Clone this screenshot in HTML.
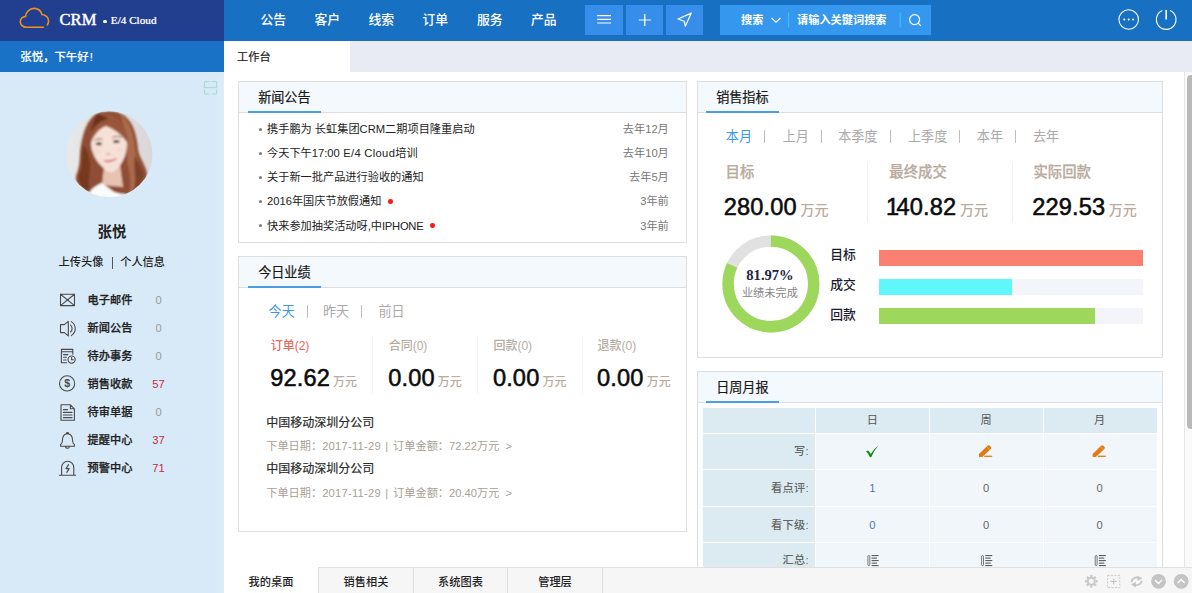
<!DOCTYPE html>
<html lang="zh-CN">
<head>
<meta charset="utf-8">
<title>CRM E/4 Cloud</title>
<style>
*{box-sizing:border-box;margin:0;padding:0}
html,body{width:1192px;height:593px;overflow:hidden;background:#fff}
body{position:relative;font-family:"Liberation Sans","Noto Sans CJK SC",sans-serif;font-size:11.2px;color:#222;-webkit-font-smoothing:antialiased}
.abs{position:absolute}
.t{position:absolute;white-space:nowrap;line-height:20px;height:20px}
/* header */
#logo{position:absolute;left:0;top:0;width:224px;height:41px;background:#223f8f}
#hdr{position:absolute;left:224px;top:0;width:968px;height:41px;background:#1870c3}
#greet{position:absolute;left:0;top:41px;width:224px;height:31px;background:#1a72c6}
#side{position:absolute;left:0;top:72px;width:224px;height:521px;background:#d8eaf8}
#tabbar{position:absolute;left:224px;top:41px;width:968px;height:31px;background:#e8ebf4}
#tab1{position:absolute;left:224px;top:41px;width:126px;height:31px;background:#fff}
.nav{position:absolute;top:9.8px;height:20px;line-height:20px;color:#fff;font-size:12.8px;font-weight:500;white-space:nowrap}
.hb{position:absolute;top:5px;height:30px;background:#378eea}
/* panels */
.panel{position:absolute;border:1px solid #dedede;background:#fff}
.ph{position:absolute;left:0;top:0;right:0;height:31px;background:#f4f9fd;border-bottom:1px solid #dedede}
.ph .ul{position:absolute;left:9px;bottom:-1px;width:73px;height:2px;background:#4a9de3}
.ph .tt{position:absolute;left:19.2px;top:5.6px;line-height:20px;font-size:13.1px;color:#1a1a1a;font-weight:400;-webkit-text-stroke:0.22px #1a1a1a;white-space:nowrap}

.tab{position:absolute;white-space:nowrap;line-height:20px;height:20px;font-size:13.1px;margin-top:0.4px;color:#a9a9a9}
.tab.on{color:#3a98f0}
.sep{position:absolute;width:1px;height:13px;background:#bdbdbd}
.lbl{position:absolute;white-space:nowrap;line-height:20px;height:20px}
.num{position:absolute;white-space:nowrap;line-height:30px;height:30px;font-size:23.6px;font-weight:normal;color:#0c0c0c;letter-spacing:0.15px;-webkit-text-stroke:0.55px #0c0c0c;margin-top:1px}
.num span{-webkit-text-stroke:0}
.wy{position:absolute;white-space:nowrap;line-height:20px;height:20px;color:#b9ab9e;font-weight:500}
.vd{position:absolute;width:1px;background:#f3f3f3}
.nw{position:absolute;left:28px;white-space:nowrap;line-height:20px;height:20px;font-size:11.2px;color:#222}
.nd{position:absolute;right:17.2px;white-space:nowrap;line-height:20px;height:20px;font-size:11.2px;color:#777;text-align:right}
.bu{position:absolute;left:20px;width:3px;height:3px;border-radius:50%;background:#7a7a7a}
.rd{display:inline-block;width:4.6px;height:4.6px;border-radius:50%;background:#f21d1d;margin-left:7px;vertical-align:1.6px}
</style>
</head>
<body>

<div id="logo">
<svg class="abs" style="left:0;top:0" width="224" height="41" viewBox="0 0 224 41"><path d="M43.5 27.3 H26.5 C22.8 27.3 20.3 24.8 20.3 21.8 C20.3 19 22.5 16.7 25.6 16.4 C26 11.9 29.6 8.4 34 8.4 C37.8 8.4 41 10.9 42 14.5 C45.7 14.7 48.6 17.4 48.6 20.9 C48.6 22.4 48.2 23.7 47.4 24.8" fill="none" stroke="#f0931d" stroke-width="1.6" stroke-linecap="round"/></svg>
<div class="t" style="left:59.5px;top:9.5px;font-family:'Liberation Serif',serif;font-size:16.6px;color:#fff;letter-spacing:0;-webkit-text-stroke:0.3px #fff;text-shadow:0 0 1px rgba(255,255,255,.5)">CRM</div>
<div class="abs" style="left:102.8px;top:19.7px;width:3.8px;height:3.8px;border-radius:50%;background:#fff"></div>
<div class="t" style="left:110.8px;top:10.3px;font-family:'Liberation Serif',serif;font-weight:normal;font-size:11.2px;color:#fff;-webkit-text-stroke:0.2px #fff;text-shadow:0 0 1px rgba(255,255,255,.35)">E/4 Cloud</div>
</div>
<div id="hdr">
<div class="nav" style="left:36.5px">公告</div>
<div class="nav" style="left:90.5px">客户</div>
<div class="nav" style="left:144.5px">线索</div>
<div class="nav" style="left:198.5px">订单</div>
<div class="nav" style="left:253px">服务</div>
<div class="nav" style="left:307px">产品</div>
<div class="hb" style="left:361px;width:38px"></div>
<div class="hb" style="left:402px;width:37px"></div>
<div class="hb" style="left:442px;width:37px"></div>
<div class="hb" style="left:496px;width:211px;background:#3597ed"></div>
<svg class="abs" style="left:0;top:0" width="968" height="41" viewBox="224 0 968 41" fill="none" stroke="#fff" stroke-width="1.2">
<path d="M597.2 15.6H611M597.2 19.3H611M597.2 23H611"/>
<path d="M638.8 20H650.8M644.8 14V26"/>
<path d="M691.3 13.1L678 19L684.2 21.3L685.3 26.2Z" stroke-linejoin="round"/>
<path d="M771.6 18L776 22.3L780.4 18" stroke-width="1.15"/>
<path d="M788.7 12.5V27.5M900.2 12.5V27.5" stroke="#48c3f3" stroke-width="1"/>
<circle cx="914.6" cy="19.6" r="5" stroke-width="1.2"/><path d="M918.2 23.2L920.8 25.8" stroke-width="1.2"/>
<circle cx="1128.7" cy="19.5" r="9.8" stroke-width="1.1"/>
<circle cx="1124.3" cy="19.6" r="1" fill="#fff" stroke="none"/><circle cx="1128.7" cy="19.6" r="1" fill="#fff" stroke="none"/><circle cx="1133.1" cy="19.6" r="1" fill="#fff" stroke="none"/>
<path d="M1162.3 10.6A9.8 9.8 0 1 0 1170.1 10.6" stroke-width="1.1"/><path d="M1166.2 10V19.5" stroke-width="1.6"/>
</svg>
<div class="t" style="left:517px;top:9.5px;color:#fff;font-weight:bold;font-size:11.2px">搜索</div>
<div class="t" style="left:573px;top:9.5px;color:#fff;font-weight:bold;font-size:11.2px">请输入关键词搜索</div>
</div>
<div id="greet"><div class="t" style="left:20.3px;top:5.5px;color:#fff;font-weight:500;-webkit-text-stroke:0.15px #fff;font-size:11.4px">张悦，下午好<span style="margin-left:1.2px">!</span></div></div>
<div id="side"><div class="abs" style="right:0;top:0;width:6px;height:521px;background:#dbecf9"></div>
<svg class="abs" style="left:0;top:0" width="224" height="521" viewBox="0 72 224 521" fill="none">
<defs><clipPath id="avc"><circle cx="109.4" cy="154.2" r="43"/></clipPath><filter id="bl" x="-10%" y="-10%" width="120%" height="120%"><feGaussianBlur stdDeviation="0.9"/></filter>
<linearGradient id="avbg" x1="0" x2="1"><stop offset="0" stop-color="#e9e9ea"/><stop offset="1" stop-color="#d9d7d8"/></linearGradient></defs>
<!-- scan icon -->
<path d="M204.4 87V81.6H209.6M211.4 81.6H216.6V87M203.8 87.7H217.2M204.4 89.6V93.9H209.6M211.4 93.9H216.6V89.6" stroke="#a3dccd" stroke-width="1"/>
<!-- avatar -->
<g clip-path="url(#avc)"><rect x="66" y="111" width="87" height="87" fill="url(#avbg)"/>
<g filter="url(#bl)" transform="translate(60 105)">
<path d="M36 9C44 5 58 5 66 12C74 19 77 32 78 44C79 54 88 62 87 72C86 80 78 86 68 89L30 88C20 84 13 78 17 68C21 58 19 50 21 40C23 28 27 15 36 9Z" fill="#8f4e34"/>
<path d="M60 9C70 15 74 30 75 44C76 56 85 64 83 73C81 80 75 84 69 87C73 75 67 63 67 51C67 36 65 22 60 9Z" fill="#ab6a4c"/>
<path d="M75 50C78 58 84 64 83 72C82 78 78 82 74 84C77 74 73 62 75 50Z" fill="#7d412b"/>
<path d="M23 40C21 52 23 60 19 70C17 78 23 84 30 87C27 77 31 67 30 57C29 49 27 44 23 40Z" fill="#77391f"/>
<path d="M44 62L60 60L63 82L42 80Z" fill="#e9c3b1"/>
<path d="M27 92C30 84 37 80 42 78L54 87L68 91L60 100L30 100Z" fill="#fbfbfb"/>
<path d="M31 38C31 26 38 18 48 18C60 18 67 26 67 38C67 50 62 59 56 65C53 68 50 68 47 66C39 60 31 50 31 38Z" fill="#f6e1d7"/>
<path d="M37 10C33 18 30 28 30 41C33 31 38 24 46 21C54 24 62 29 68 39C68 26 62 14 52 10C46 8 41 8 37 10Z" fill="#99563a"/>
<path d="M37 9C34 14 32 20 31 28C35 20 41 15 49 14C44 11 40 9 37 9Z" fill="#6b311c"/>
<path d="M34.5 35.2C37 33.6 40 33.4 42.5 34.4M52.5 32.6C55.5 31 59 31 61.5 32.6" stroke="#7a4a38" stroke-width="1" fill="none"/>
<ellipse cx="38.8" cy="38.8" rx="3" ry="1.5" fill="#4e322c"/><ellipse cx="56.3" cy="36.6" rx="3.2" ry="1.5" fill="#4e322c"/>
<path d="M43.8 55.2C47 57.4 52 57 56.6 53.4C52 55.6 47 56.2 43.8 55.2Z" fill="#dc6f78" stroke="#dc6f78" stroke-width="1.1"/>
<ellipse cx="48.2" cy="49" rx="2.4" ry="1" fill="#dba695"/>
<ellipse cx="37" cy="47" rx="4" ry="3" fill="#f3cfc4" opacity=".35"/><ellipse cx="60" cy="45" rx="4" ry="3" fill="#f3cfc4" opacity=".35"/>
</g></g>
<!-- menu icons -->
<g stroke="#4a4a4a" stroke-width="1.1" stroke-linejoin="round" stroke-linecap="round">
<path d="M60.5 294.2H74.5V305.6H60.5ZM60.5 294.2L74.5 305.6M74.5 294.2L60.5 305.6"/>
<path d="M60.5 324.6H64.3L68.3 321.3V335.9L64.3 332.6H60.5ZM70.6 325.2A4.6 4.6 0 0 1 70.6 332M71.3 321.6A8.2 8.2 0 0 1 71.3 335.6"/>
<path d="M72.8 354.2V349.4H61.4V362.8H66.6M61.4 351.8H72.8M63.6 354.6H68M63.6 357.3H66.4M63.6 360H66"/><circle cx="71.6" cy="359.6" r="3.6"/><path d="M71.6 357.6V359.8H73.4"/>
<circle cx="67.1" cy="383.4" r="7.6"/>
<path d="M61 404.8H70.4L74.4 408.8V420.2H61ZM70.4 404.8V408.8H74.4M63.4 409.6H67.6M63.4 412.4H72M63.4 415H72M63.4 417.6H72"/>
<path d="M60.6 446.2H74.4V444.6C73 443.8 72.6 442.6 72.6 440.4C72.6 436.4 70.6 434 67.5 433.6C64.4 434 62.4 436.4 62.4 440.4C62.4 442.6 62 443.8 60.6 444.6ZM66.3 433.4A1.3 1.3 0 0 1 68.7 433.4M65.6 446.4A1.9 1.9 0 0 0 69.4 446.4"/>
<path d="M59.4 475.2H75.6M61.6 475.2V467.4A6.1 6.1 0 0 1 73.8 467.4V475.2"/><path d="M68.6 464.6L66 468.6H69.2L66.8 472.4" stroke-width="1.1"/>
</g>
</svg>
<div class="t" style="left:59px;width:52px;text-align:center;top:374.8px;transform:translateY(-72px);font-size:10.6px;font-weight:bold;color:#4a4a4a;line-height:17px;height:17px;left:41.1px">$</div>
<div class="t" style="left:62px;width:100px;text-align:center;top:150px;font-size:14.4px;font-weight:bold;color:#222">张悦</div>
<div class="t" style="left:58.6px;top:180.4px;font-size:11.2px;font-weight:500;color:#222">上传头像</div>
<div class="abs" style="left:112px;top:184.5px;width:1px;height:12px;background:#555"></div>
<div class="t" style="left:120.2px;top:180.4px;font-size:11.2px;font-weight:500;color:#222">个人信息</div>
<div class="t" style="left:87.6px;top:217.6px;font-size:11.2px;font-weight:500;-webkit-text-stroke:0.25px #222;color:#222">电子邮件</div><div class="t" style="left:138.5px;width:40px;text-align:center;top:217.6px;font-size:11.2px;color:#999">0</div>
<div class="t" style="left:87.6px;top:245.6px;font-size:11.2px;font-weight:500;-webkit-text-stroke:0.25px #222;color:#222">新闻公告</div><div class="t" style="left:138.5px;width:40px;text-align:center;top:245.6px;font-size:11.2px;color:#999">0</div>
<div class="t" style="left:87.6px;top:273.6px;font-size:11.2px;font-weight:500;-webkit-text-stroke:0.25px #222;color:#222">待办事务</div><div class="t" style="left:138.5px;width:40px;text-align:center;top:273.6px;font-size:11.2px;color:#999">0</div>
<div class="t" style="left:87.6px;top:301.6px;font-size:11.2px;font-weight:500;-webkit-text-stroke:0.25px #222;color:#222">销售收款</div><div class="t" style="left:138.5px;width:40px;text-align:center;top:301.6px;font-size:11.2px;color:#c9283e">57</div>
<div class="t" style="left:87.6px;top:329.6px;font-size:11.2px;font-weight:500;-webkit-text-stroke:0.25px #222;color:#222">待审单据</div><div class="t" style="left:138.5px;width:40px;text-align:center;top:329.6px;font-size:11.2px;color:#999">0</div>
<div class="t" style="left:87.6px;top:357.6px;font-size:11.2px;font-weight:500;-webkit-text-stroke:0.25px #222;color:#222">提醒中心</div><div class="t" style="left:138.5px;width:40px;text-align:center;top:357.6px;font-size:11.2px;color:#c9283e">37</div>
<div class="t" style="left:87.6px;top:385.6px;font-size:11.2px;font-weight:500;-webkit-text-stroke:0.25px #222;color:#222">预警中心</div><div class="t" style="left:138.5px;width:40px;text-align:center;top:385.6px;font-size:11.2px;color:#c9283e">71</div>
</div>
<div class="panel" style="left:238px;top:81px;width:449px;height:162px"><div class="ph"><div class="tt">新闻公告</div><div class="ul"></div></div>
<div class="bu" style="top:46px"></div><div class="nw" style="top:36.8px">携手鹏为 长虹集团CRM二期项目隆重启动</div><div class="nd" style="top:36.8px">去年12月</div>
<div class="bu" style="top:70px"></div><div class="nw" style="top:61.0px">今天下午17:00<span style="letter-spacing:0.32px"> E/4 Cloud</span>培训</div><div class="nd" style="top:61.0px">去年10月</div>
<div class="bu" style="top:94px"></div><div class="nw" style="top:85.2px">关于新一批产品进行验收的通知</div><div class="nd" style="top:85.2px">去年5月</div>
<div class="bu" style="top:118px"></div><div class="nw" style="top:109.4px">2016年国庆节放假通知<span class=rd></span></div><div class="nd" style="top:109.4px">3年前</div>
<div class="bu" style="top:142px"></div><div class="nw" style="top:133.6px">快来参加抽奖活动呀,中<span style="letter-spacing:-0.25px">IPHONE</span><span class=rd></span></div><div class="nd" style="top:133.6px">3年前</div>
</div>
<div class="panel" style="left:238px;top:256px;width:449px;height:276px"><div class="ph"><div class="tt">今日业绩</div><div class="ul"></div></div>
<div class="tab on" style="left:29.600000000000023px;top:44.8px">今天</div><div class="sep" style="left:68px;top:48px"></div>
<div class="tab" style="left:84px;top:44.8px">昨天</div><div class="sep" style="left:122px;top:48px"></div>
<div class="tab" style="left:139.4px;top:44.8px">前日</div>
<div class="lbl" style="left:31.7px;top:78.7px;font-size:12px;color:#e8695c;font-weight:500">订单(2)</div><div class="num" style="left:31.2px;top:104.6px">92.62<span style="font-size:12px;font-weight:500;color:#b9ab9e;letter-spacing:0;margin-left:3.1px">万元</span></div>
<div class="lbl" style="left:149.7px;top:78.7px;font-size:12px;color:#b5aca3;font-weight:500">合同(0)</div><div class="num" style="left:149.2px;top:104.6px">0.00<span style="font-size:12px;font-weight:500;color:#b9ab9e;letter-spacing:0;margin-left:3.1px">万元</span></div>
<div class="lbl" style="left:254.4px;top:78.7px;font-size:12px;color:#b5aca3;font-weight:500">回款(0)</div><div class="num" style="left:253.9px;top:104.6px">0.00<span style="font-size:12px;font-weight:500;color:#b9ab9e;letter-spacing:0;margin-left:3.1px">万元</span></div>
<div class="lbl" style="left:358.5px;top:78.7px;font-size:12px;color:#b5aca3;font-weight:500">退款(0)</div><div class="num" style="left:358.0px;top:104.6px">0.00<span style="font-size:12px;font-weight:500;color:#b9ab9e;letter-spacing:0;margin-left:3.1px">万元</span></div>
<div class="vd" style="left:133px;top:79px;height:58px"></div><div class="vd" style="left:238px;top:79px;height:58px"></div><div class="vd" style="left:343px;top:79px;height:58px"></div>
<div class="lbl" style="left:27.2px;top:155.7px;font-size:12px;color:#2b2b2b;font-weight:400;-webkit-text-stroke:0.2px #2b2b2b">中国移动深圳分公司</div>
<div class="lbl" style="left:27.2px;top:179.1px;font-size:11.2px;color:#a89f95">下单日期：<span style="letter-spacing:0.23px;word-spacing:1.2px">2017-11-29 | </span>订单金额：72.22万元&nbsp;&nbsp;&gt;</div>
<div class="lbl" style="left:27.2px;top:202.2px;font-size:12px;color:#2b2b2b;font-weight:400;-webkit-text-stroke:0.2px #2b2b2b">中国移动深圳分公司</div>
<div class="lbl" style="left:27.2px;top:225.6px;font-size:11.2px;color:#a89f95">下单日期：<span style="letter-spacing:0.23px;word-spacing:1.2px">2017-11-29 | </span>订单金额：20.40万元&nbsp;&nbsp;&gt;</div>
</div>
<div class="panel" style="left:697px;top:81px;width:466px;height:277px"><div class="ph"><div class="tt" style="left:18.2px">销售指标</div><div class="ul" style="left:8px"></div></div>
<div class="tab on" style="left:27.8px;top:44.8px">本月</div><div class="tab" style="left:84.7px;top:44.8px">上月</div><div class="tab" style="left:140.2px;top:44.8px">本季度</div><div class="tab" style="left:210.0px;top:44.8px">上季度</div><div class="tab" style="left:278.8px;top:44.8px">本年</div><div class="tab" style="left:335.0px;top:44.8px">去年</div><div class="sep" style="left:66.3px;top:48px"></div><div class="sep" style="left:122.5px;top:48px"></div><div class="sep" style="left:192.0px;top:48px"></div><div class="sep" style="left:260.8px;top:48px"></div><div class="sep" style="left:317.0px;top:48px"></div>
<div class="lbl" style="left:27.6px;top:79.8px;font-size:14.4px;color:#b9ab9e;font-weight:500;-webkit-text-stroke:0.25px #b9ab9e">目标</div><div class="num" style="left:25.8px;top:109.2px">280.00<span style="font-size:14px;font-weight:500;color:#b9ab9e;letter-spacing:0;margin-left:3.6px">万元</span></div>
<div class="lbl" style="left:191.3px;top:79.8px;font-size:14.4px;color:#b9ab9e;font-weight:500;-webkit-text-stroke:0.25px #b9ab9e">最终成交</div><div class="num" style="left:189.6px;top:109.2px"><i style="font-style:normal;letter-spacing:-2.6px;margin-left:-1.6px">1</i>40.82<span style="font-size:14px;font-weight:500;color:#b9ab9e;letter-spacing:0;margin-left:3.6px">万元</span></div>
<div class="lbl" style="left:335.4px;top:79.8px;font-size:14.4px;color:#b9ab9e;font-weight:500;-webkit-text-stroke:0.25px #b9ab9e">实际回款</div><div class="num" style="left:334.2px;top:109.2px">229.53<span style="font-size:14px;font-weight:500;color:#b9ab9e;letter-spacing:0;margin-left:3.6px">万元</span></div>
<div class="vd" style="left:169px;top:81px;height:59px"></div><div class="vd" style="left:314px;top:81px;height:59px"></div>
<svg class="abs" style="left:0;top:0" width="464" height="275" viewBox="698 82 464 275"><circle cx="770.9" cy="283.9" r="42.85" fill="none" stroke="#e1e1e1" stroke-width="11.3"/><circle cx="770.9" cy="283.9" r="42.85" fill="none" stroke="#9dd85c" stroke-width="11.3" stroke-dasharray="220.69 269.23" transform="rotate(-90 770.9 283.9)"/>
<rect x="879" y="250" width="264" height="16" fill="#fa8072"/><rect x="879" y="279" width="264" height="16" fill="#f4f5fb"/><rect x="879" y="279" width="133" height="16" fill="#5ff6fc"/><rect x="879" y="308" width="264" height="16" fill="#f4f5fb"/><rect x="879" y="308" width="216" height="16" fill="#9dd85c"/></svg>
<div class="lbl" style="left:22.9px;width:100px;text-align:center;top:182.5px;font-family:'Liberation Serif',serif;font-weight:bold;font-size:14.6px;color:#25253f;margin-left:-0.9px">81.97%</div>
<div class="lbl" style="left:22.9px;width:100px;text-align:center;top:201.4px;font-size:11.2px;color:#858585;margin-left:-1px">业绩未完成</div>
<div class="lbl" style="left:132.3px;top:162.5px;font-size:12.8px;color:#1c1c30;font-weight:500">目标</div>
<div class="lbl" style="left:132.3px;top:192.8px;font-size:12.8px;color:#1c1c30;font-weight:500">成交</div>
<div class="lbl" style="left:132.3px;top:223.2px;font-size:12.8px;color:#1c1c30;font-weight:500">回款</div>
</div>
<div class="panel" style="left:697px;top:371px;width:466px;height:230px"><div class="ph"><div class="tt" style="left:18.2px">日周月报</div><div class="ul" style="left:8px"></div></div>
<div class="abs" style="left:5px;top:36px;width:112px;height:25px;background:#dcebf2"></div><div class="abs" style="left:118px;top:36px;width:113px;height:25px;background:#dcebf2"></div><div class="abs" style="left:232px;top:36px;width:113px;height:25px;background:#dcebf2"></div><div class="abs" style="left:346px;top:36px;width:113px;height:25px;background:#dcebf2"></div><div class="abs" style="left:5px;top:62px;width:112px;height:35px;background:#dcebf2"></div><div class="abs" style="left:118px;top:62px;width:113px;height:35px;background:#f1f6fb"></div><div class="abs" style="left:232px;top:62px;width:113px;height:35px;background:#f1f6fb"></div><div class="abs" style="left:346px;top:62px;width:113px;height:35px;background:#f1f6fb"></div><div class="abs" style="left:5px;top:98px;width:112px;height:36px;background:#dcebf2"></div><div class="abs" style="left:118px;top:98px;width:113px;height:36px;background:#f1f6fb"></div><div class="abs" style="left:232px;top:98px;width:113px;height:36px;background:#f1f6fb"></div><div class="abs" style="left:346px;top:98px;width:113px;height:36px;background:#f1f6fb"></div><div class="abs" style="left:5px;top:135px;width:112px;height:35px;background:#dcebf2"></div><div class="abs" style="left:118px;top:135px;width:113px;height:35px;background:#f1f6fb"></div><div class="abs" style="left:232px;top:135px;width:113px;height:35px;background:#f1f6fb"></div><div class="abs" style="left:346px;top:135px;width:113px;height:35px;background:#f1f6fb"></div><div class="abs" style="left:5px;top:171px;width:112px;height:36px;background:#dcebf2"></div><div class="abs" style="left:118px;top:171px;width:113px;height:36px;background:#f1f6fb"></div><div class="abs" style="left:232px;top:171px;width:113px;height:36px;background:#f1f6fb"></div><div class="abs" style="left:346px;top:171px;width:113px;height:36px;background:#f1f6fb"></div>
<div class="lbl" style="left:144.4px;width:60px;text-align:center;top:38.2px;font-size:11.2px;color:#555">日</div><div class="lbl" style="left:258.0px;width:60px;text-align:center;top:38.2px;font-size:11.2px;color:#555">周</div><div class="lbl" style="left:371.7px;width:60px;text-align:center;top:38.2px;font-size:11.2px;color:#555">月</div><div class="lbl" style="left:10.8px;width:100px;text-align:right;top:69.4px;font-size:11.2px;color:#666;font-weight:500;letter-spacing:0.3px">写:</div><div class="lbl" style="left:10.8px;width:100px;text-align:right;top:106.4px;font-size:11.2px;color:#666;font-weight:500;letter-spacing:0.3px">看点评:</div><div class="lbl" style="left:10.8px;width:100px;text-align:right;top:142.6px;font-size:11.2px;color:#666;font-weight:500;letter-spacing:0.3px">看下级:</div><div class="lbl" style="left:10.8px;width:100px;text-align:right;top:178.4px;font-size:11.2px;color:#666;font-weight:500;letter-spacing:0.3px">汇总:</div><div class="lbl" style="left:144.4px;width:60px;text-align:center;top:106.4px;font-size:11.2px;color:#4f79a8">1</div><div class="lbl" style="left:258.0px;width:60px;text-align:center;top:106.4px;font-size:11.2px;color:#666">0</div><div class="lbl" style="left:371.7px;width:60px;text-align:center;top:106.4px;font-size:11.2px;color:#666">0</div><div class="lbl" style="left:144.4px;width:60px;text-align:center;top:142.6px;font-size:11.2px;color:#4f79a8">0</div><div class="lbl" style="left:258.0px;width:60px;text-align:center;top:142.6px;font-size:11.2px;color:#666">0</div><div class="lbl" style="left:371.7px;width:60px;text-align:center;top:142.6px;font-size:11.2px;color:#666">0</div>
<svg class="abs" style="left:0;top:0" width="464" height="228" viewBox="698 372 464 228" id="rpticons"><path d="M866 451.3L868.2 450.5L870.7 453.9Q874 448.6 878.4 445.5Q873.6 451 871.2 457.3H870Q868.6 454 866 451.3Z" fill="#138a13"/><g transform="translate(0 0)"><path d="M979 457V454.1L987.5 445.7Q988.6 444.9 989.7 445.8L991 447.1Q991.7 448.2 990.8 449.1L982.3 457Z" fill="#e07c12"/><path d="M987.3 447.2L989.6 449.5" stroke="#f6e3cc" stroke-width="0.5"/><path d="M984.2 456.3H992.2" stroke="#e07c12" stroke-width="1.3"/></g><g transform="translate(113.6 0)"><path d="M979 457V454.1L987.5 445.7Q988.6 444.9 989.7 445.8L991 447.1Q991.7 448.2 990.8 449.1L982.3 457Z" fill="#e07c12"/><path d="M987.3 447.2L989.6 449.5" stroke="#f6e3cc" stroke-width="0.5"/><path d="M984.2 456.3H992.2" stroke="#e07c12" stroke-width="1.3"/></g><g transform="translate(0 0)" stroke="#444" fill="none"><rect x="867.9" y="555.6" width="1.9" height="10" rx="0.9" stroke-width="0.7"/><path d="M871.6 555.6H878.6M871.6 558.1H877M871.6 560.6H878.6M871.6 563.1H877M871.6 565.6H878.6" stroke-width="0.95"/></g><g transform="translate(113.7 0)" stroke="#444" fill="none"><rect x="867.9" y="555.6" width="1.9" height="10" rx="0.9" stroke-width="0.7"/><path d="M871.6 555.6H878.6M871.6 558.1H877M871.6 560.6H878.6M871.6 563.1H877M871.6 565.6H878.6" stroke-width="0.95"/></g><g transform="translate(227.3 0)" stroke="#444" fill="none"><rect x="867.9" y="555.6" width="1.9" height="10" rx="0.9" stroke-width="0.7"/><path d="M871.6 555.6H878.6M871.6 558.1H877M871.6 560.6H878.6M871.6 563.1H877M871.6 565.6H878.6" stroke-width="0.95"/></g></svg>
</div>
<div id="tabbar"></div>
<div id="tab1"><div class="t" style="left:13px;top:5.5px;font-size:11.2px;color:#222;font-weight:400;-webkit-text-stroke:0.2px #222">工作台</div></div>
<div class="abs" style="left:1184px;top:72px;width:8px;height:495px;background:#fafafa;border-left:1px solid #e6e6e6"></div>
<div class="abs" style="left:1187px;top:75px;width:8px;height:354px;background:#b9b9b9;border-radius:4px"></div>
<div class="abs" id="bbar" style="left:224px;top:567px;width:968px;height:26px;background:#f6f6f6;border-top:1px solid #e0e0e0">
<div class="abs" style="left:0;top:-1px;width:94px;height:27px;background:#fff"></div>
<div class="abs" style="left:94px;top:0;width:1px;height:26px;background:#dcdcdc"></div>
<div class="abs" style="left:189px;top:0;width:1px;height:26px;background:#dcdcdc"></div>
<div class="abs" style="left:283px;top:0;width:1px;height:26px;background:#dcdcdc"></div>
<div class="abs" style="left:378px;top:0;width:1px;height:26px;background:#dcdcdc"></div>
<div class="lbl" style="left:0;width:94px;text-align:center;top:3.5px;font-size:11.2px;font-weight:500;color:#222">我的桌面</div>
<div class="lbl" style="left:95px;width:94px;text-align:center;top:3.5px;font-size:11.2px;font-weight:500;color:#222">销售相关</div>
<div class="lbl" style="left:190px;width:93px;text-align:center;top:3.5px;font-size:11.2px;font-weight:500;color:#222">系统图表</div>
<div class="lbl" style="left:284px;width:94px;text-align:center;top:3.5px;font-size:11.2px;font-weight:500;color:#222">管理层</div>
<svg class="abs" style="left:0;top:0" width="968" height="26" viewBox="224 568 968 26" id="bicons"><path d="M1095.50 581.20L1097.60 581.20M1094.27 584.17L1095.75 585.65M1091.30 585.40L1091.30 587.50M1088.33 584.17L1086.85 585.65M1087.10 581.20L1085.00 581.20M1088.33 578.23L1086.85 576.75M1091.30 577.00L1091.30 574.90M1094.27 578.23L1095.75 576.75" stroke="#c9c9c9" stroke-width="2.4" fill="none"/><circle cx="1091.3" cy="581.2" r="3.5" fill="none" stroke="#c9c9c9" stroke-width="2"/><rect x="1107.6" y="575.4" width="12.2" height="12.2" fill="none" stroke="#c4c4c4" stroke-width="0.9" stroke-dasharray="2 1.4"/><path d="M1110.6 581.5H1116.8M1113.7 578.4V584.6" stroke="#c4c4c4" stroke-width="1.1"/><g fill="none" stroke="#c6c6c6" stroke-width="1.7"><path d="M1131.6 582.2A5 4.4 0 0 1 1139.6 578.4"/><path d="M1141.6 580.6A5 4.4 0 0 1 1133.8 584.4"/></g><path d="M1137.6 575.4L1142.4 578.6L1137.4 580.9Z" fill="#c6c6c6"/><path d="M1135.8 587.4L1131 584.3L1136 582Z" fill="#c6c6c6"/><circle cx="1158.5" cy="581.3" r="7.4" fill="#c4c4c4"/><path d="M1155 579.9L1158.5 583.4L1162 579.9" fill="none" stroke="#fff" stroke-width="1.4"/><circle cx="1181.2" cy="581.3" r="7.4" fill="#c4c4c4"/><path d="M1177.7 582.9L1181.2 579.4L1184.7 582.9" fill="none" stroke="#fff" stroke-width="1.4"/></svg>
</div>
</body>
</html>
